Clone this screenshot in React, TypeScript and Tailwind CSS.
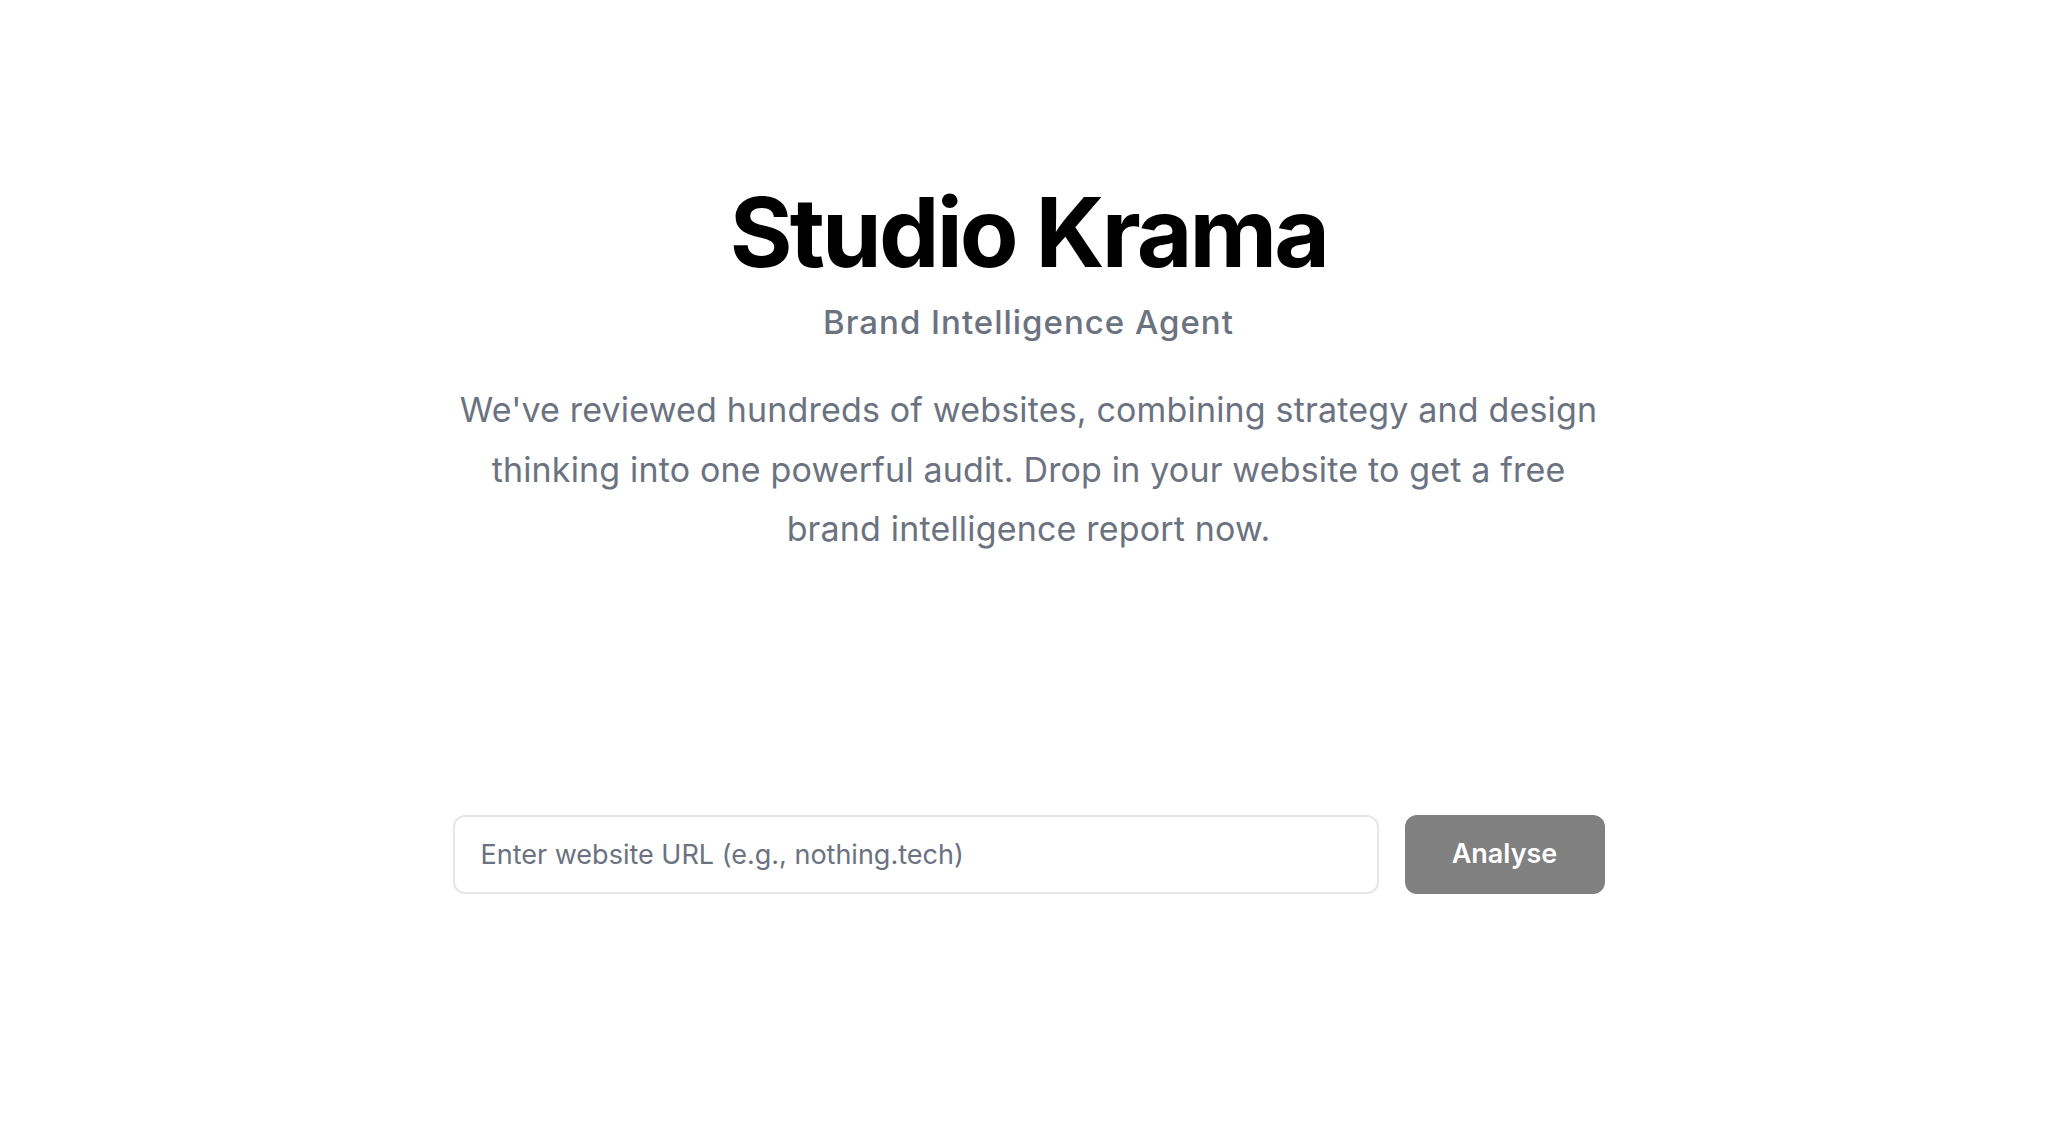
import React from 'react';

export default function App() {
  return (
    <main className="min-h-screen bg-white pr-[15px] font-['Inter',sans-serif]">
      <section className="mx-auto flex w-full max-w-6xl flex-col items-center pt-[184px] text-center">
        <h1 className="text-[96px] font-bold leading-none tracking-[-0.03em] text-black">Studio Krama</h1>
        <p className="mt-[24px] text-[33px] font-medium leading-[36px] tracking-[0.03em] text-[#6b7280]">
          Brand Intelligence Agent
        </p>
        <p className="mt-[40px] max-w-[1160px] text-[34px] leading-[59.5px] tracking-[0.005em] text-[#6b7280]">
          We've reviewed hundreds of websites, combining strategy and design thinking into one powerful audit. Drop in
          your website to get a free brand intelligence report now.
        </p>

        <form className="mt-[256px] flex w-full gap-[26px]" onSubmit={(e) => e.preventDefault()}>
          <input
            type="text"
            placeholder="Enter website URL (e.g., nothing.tech)"
            className="h-[79px] flex-1 rounded-[12px] border-2 border-[#e5e7eb] px-[26px] text-[27px] text-gray-800 outline-none placeholder:text-[#6b7280]"
          />
          <button type="submit" className="h-[79px] w-[200px] rounded-[12px] bg-[#808080] text-[27px] font-semibold text-white">
            Analyse
          </button>
        </form>
      </section>
    </main>
  );
}
